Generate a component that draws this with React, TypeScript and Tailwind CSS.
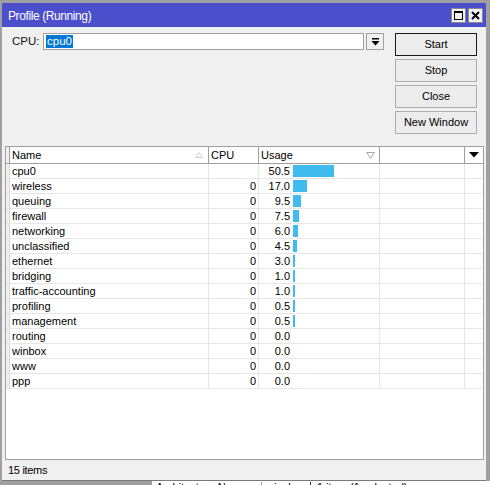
import React from "react";

type Row = { name: string; cpu: string; usage: number };

const rows: Row[] = [
  { name: "cpu0", cpu: "", usage: 50.5 },
  { name: "wireless", cpu: "0", usage: 17.0 },
  { name: "queuing", cpu: "0", usage: 9.5 },
  { name: "firewall", cpu: "0", usage: 7.5 },
  { name: "networking", cpu: "0", usage: 6.0 },
  { name: "unclassified", cpu: "0", usage: 4.5 },
  { name: "ethernet", cpu: "0", usage: 3.0 },
  { name: "bridging", cpu: "0", usage: 1.0 },
  { name: "traffic-accounting", cpu: "0", usage: 1.0 },
  { name: "profiling", cpu: "0", usage: 0.5 },
  { name: "management", cpu: "0", usage: 0.5 },
  { name: "routing", cpu: "0", usage: 0.0 },
  { name: "winbox", cpu: "0", usage: 0.0 },
  { name: "www", cpu: "0", usage: 0.0 },
  { name: "ppp", cpu: "0", usage: 0.0 },
];

function Btn({ label, primary }: { label: string; primary?: boolean }) {
  return (
    <div
      className={
        "w-[82px] h-[23px] flex items-center justify-center bg-[#ececec] text-[11px] text-black border " +
        (primary ? "border-[#1a1a1a]" : "border-[#adadad]")
      }
    >
      {label}
    </div>
  );
}

export default function App() {
  return (
    <div className="w-[490px] h-[485px] bg-[#a0a0a0] overflow-hidden font-['Liberation_Sans',Arial,sans-serif] text-[11px] text-black">
      <div className="ml-[2px] mt-[3px] w-[484px] h-[478px] bg-[#f0f0f0] flex flex-col">
        {/* title bar */}
        <div className="h-[24px] bg-[#4b4fcc] flex items-center pl-[6px] shrink-0">
          <span className="text-white text-[12px] tracking-[-0.4px] mt-[2px]">Profile (Running)</span>
          <div className="ml-auto mr-[3px] flex gap-[2px]">
            <div className="w-[15px] h-[15px] bg-[#f0f0f0] border border-[#8a8a8a] flex items-center justify-center">
              <div className="w-[9px] h-[9px] border border-black border-t-2" />
            </div>
            <div className="w-[15px] h-[15px] bg-[#f0f0f0] border border-[#8a8a8a] flex items-center justify-center">
              <svg width="9" height="9" viewBox="0 0 9 9">
                <path d="M1 1 L8 8 M8 1 L1 8" stroke="#000" strokeWidth="2" />
              </svg>
            </div>
          </div>
        </div>

        {/* top area */}
        <div className="mt-[6px] flex items-start h-[101px] shrink-0">
          <div className="ml-[10px] w-[31px] h-[17px] flex items-center text-[11.5px] text-[#111]">CPU:</div>
          <div className="w-[321px] h-[17px] bg-white border border-[#a0a0a0] flex items-center pl-[2px]">
            <span className="bg-[#0078d7] text-white text-[11.5px] leading-[13px] px-[1px]">cpu0</span>
          </div>
          <div className="ml-[2px] w-[18px] h-[17px] bg-[#f0f0f0] border border-[#a0a0a0] flex items-center justify-center">
            <svg width="9" height="8" viewBox="0 0 9 8">
              <rect x="1" y="0" width="7" height="1.5" fill="#000" />
              <path d="M0.5 3 L8.5 3 L4.5 7.5 Z" fill="#000" />
            </svg>
          </div>
          <div className="ml-[11px] flex flex-col gap-[3px]">
            <Btn label="Start" primary />
            <Btn label="Stop" />
            <Btn label="Close" />
            <Btn label="New Window" />
          </div>
        </div>

        {/* table */}
        <div className="mt-[12px] ml-[3px] w-[479px] h-[314px] border border-[#a0a0a0] bg-white flex flex-col shrink-0">
          <div className="h-[17px] flex border-b border-[#a0a0a0] bg-white shrink-0">
            <div className="w-[4px] bg-[#f0f0f0] border-r border-[#a0a0a0]" />
            <div className="w-[199px] border-r border-[#a0a0a0] flex items-center pl-[2px] pr-[5px]">
              <span>Name</span>
              <svg className="ml-auto" width="8" height="6" viewBox="0 0 8 6">
                <path d="M0.5 5.5 L4 0.5 L7.5 5.5 Z" fill="none" stroke="#d0d0d0" />
              </svg>
            </div>
            <div className="w-[50px] border-r border-[#a0a0a0] flex items-center pl-[2px]">CPU</div>
            <div className="w-[121px] border-r border-[#a0a0a0] flex items-center pl-[2px] pr-[4px]">
              <span>Usage</span>
              <svg className="ml-auto" width="9" height="7" viewBox="0 0 9 7">
                <path d="M0.5 0.5 L8.5 0.5 L4.5 6.5 Z" fill="none" stroke="#a8a8a8" />
              </svg>
            </div>
            <div className="w-[85px] border-r border-[#a0a0a0]" />
            <div className="w-[18px] flex items-center justify-center">
              <svg width="10" height="6" viewBox="0 0 10 6">
                <path d="M0 0 L10 0 L5 5.5 Z" fill="#000" />
              </svg>
            </div>
          </div>
          {rows.map((r) => (
            <div key={r.name} className="h-[15px] flex border-b border-[#e6e6e6] shrink-0">
              <div className="w-[4px] bg-[#f0f0f0] border-r border-[#d8d8d8]" />
              <div className="w-[199px] border-r border-[#e6e6e6] flex items-center pl-[2px] leading-none">{r.name}</div>
              <div className="w-[50px] border-r border-[#e6e6e6] flex items-center justify-end pr-[2px] leading-none">{r.cpu}</div>
              <div className="w-[121px] border-r border-[#e6e6e6] flex items-center leading-none">
                <span className="w-[31px] text-right">{r.usage.toFixed(1)}</span>
                {r.usage > 0 && (
                  <div
                    className="ml-[3px] h-[12px] bg-[#3fbbf0]"
                    style={{ width: Math.max(2, Math.round(r.usage * 0.81)) }}
                  />
                )}
              </div>
              <div className="w-[85px] border-r border-[#e6e6e6]" />
              <div className="w-[18px]" />
            </div>
          ))}
        </div>

        {/* status bar */}
        <div className="flex-1 flex items-center pl-[6px] text-[11px] tracking-[-0.3px] border-b border-[#7a7a7a]">15 items</div>
      </div>
      {/* background window peeking below */}
      <div className="flex h-[4px] overflow-hidden">
        <div className="w-[152px] bg-[#a0a0a0]" />
        <div className="flex-1 bg-white flex text-[11px] leading-[11px] pt-[1px]">
          <span className="w-[110px] pl-[4px] border-r border-[#999]">Architecture Name:</span>
          <span className="w-[49px] pl-[3px] border-r border-[#333]">mipsbe</span>
          <span className="pl-[6px]">1 item (1 selected)</span>
        </div>
      </div>
    </div>
  );
}
